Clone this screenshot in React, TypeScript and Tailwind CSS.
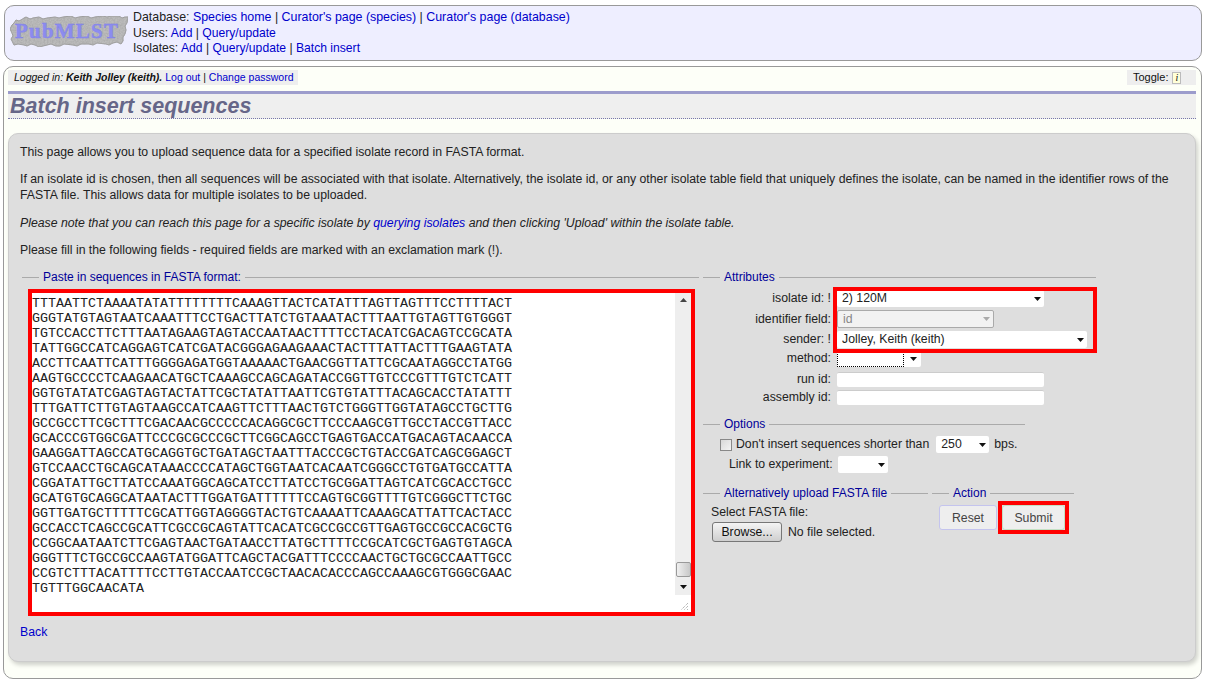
import type { ReactNode } from 'react'

const sequence = [
  'TTTAATTCTAAAATATATTTTTTTTCAAAGTTACTCATATTTAGTTAGTTTCCTTTTACT',
  'GGGTATGTAGTAATCAAATTTCCTGACTTATCTGTAAATACTTTAATTGTAGTTGTGGGT',
  'TGTCCACCTTCTTTAATAGAAGTAGTACCAATAACTTTTCCTACATCGACAGTCCGCATA',
  'TATTGGCCATCAGGAGTCATCGATACGGGAGAAGAAACTACTTTATTACTTTGAAGTATA',
  'ACCTTCAATTCATTTGGGGAGATGGTAAAAACTGAACGGTTATTCGCAATAGGCCTATGG',
  'AAGTGCCCCTCAAGAACATGCTCAAAGCCAGCAGATACCGGTTGTCCCGTTTGTCTCATT',
  'GGTGTATATCGAGTAGTACTATTCGCTATATTAATTCGTGTATTTACAGCACCTATATTT',
  'TTTGATTCTTGTAGTAAGCCATCAAGTTCTTTAACTGTCTGGGTTGGTATAGCCTGCTTG',
  'GCCGCCTTCGCTTTCGACAACGCCCCCACAGGCGCTTCCCAAGCGTTGCCTACCGTTACC',
  'GCACCCGTGGCGATTCCCGCGCCCGCTTCGGCAGCCTGAGTGACCATGACAGTACAACCA',
  'GAAGGATTAGCCATGCAGGTGCTGATAGCTAATTTACCCGCTGTACCGATCAGCGGAGCT',
  'GTCCAACCTGCAGCATAAACCCCATAGCTGGTAATCACAATCGGGCCTGTGATGCCATTA',
  'CGGATATTGCTTATCCAAATGGCAGCATCCTTATCCTGCGGATTAGTCATCGCACCTGCC',
  'GCATGTGCAGGCATAATACTTTGGATGATTTTTTCCAGTGCGGTTTTGTCGGGCTTCTGC',
  'GGTTGATGCTTTTTCGCATTGGTAGGGGTACTGTCAAAATTCAAAGCATTATTCACTACC',
  'GCCACCTCAGCCGCATTCGCCGCAGTATTCACATCGCCGCCGTTGAGTGCCGCCACGCTG',
  'CCGGCAATAATCTTCGAGTAACTGATAACCTTATGCTTTTCCGCATCGCTGAGTGTAGCA',
  'GGGTTTCTGCCGCCAAGTATGGATTCAGCTACGATTTCCCCAACTGCTGCGCCAATTGCC',
  'CCGTCTTTACATTTTCCTTGTACCAATCCGCTAACACACCCAGCCAAAGCGTGGGCGAAC',
  'TGTTTGGCAACATA',
]

const A = ({ children }: { children: ReactNode }) => (
  <a href="#" className="text-[#0000cc]">
    {children}
  </a>
)

const Logo = () => (
  <svg width="120" height="34" viewBox="0 0 120 34" className="shrink-0">
    <defs>
      <filter id="stone" x="0" y="0" width="100%" height="100%">
        <feTurbulence type="fractalNoise" baseFrequency="0.6" numOctaves="2" seed="4" />
        <feColorMatrix values="0 0 0 0 0.4  0 0 0 0 0.4  0 0 0 0 0.4  0 0 0 1.6 -0.45" />
        <feComposite in2="SourceAlpha" operator="in" result="noise" />
        <feMerge>
          <feMergeNode in="SourceGraphic" />
          <feMergeNode in="noise" />
        </feMerge>
      </filter>
    </defs>
    <path
      d="M3 10 L5 8 L7 5 L10 6 L12 5 L15 3 L17 2 L21 4 L24 3 L30 2 L34 4 L38 3 L46 2 L50 3 L54 2 L62 1 L66 3 L70 2 L78 1 L82 3 L86 2 L94 1 L98 2 L102 1 L110 1 L113 3 L116 2 L119 2 L118 8 L116 11 L117 15 L116 19 L114 22 L114 26 L112 29 L108 27 L104 28 L100 30 L97 29 L88 28 L84 30 L80 29 L72 29 L68 31 L64 30 L55 29 L51 31 L47 31 L42 29 L38 30 L30 32 L26 30 L22 29 L18 31 L15 30 L9 29 L5 30 L2 24 L4 21 L3 18 L1 14 Z"
      fill="#bcbcbc"
      stroke="#9a9a9a"
      strokeWidth="1"
      filter="url(#stone)"
    />
    <text
      x="6"
      y="23"
      fontFamily="'Liberation Serif', serif"
      fontWeight="700"
      fontSize="21"
      fill="#8c8cf0"
      stroke="#8080e4"
      strokeWidth="0.4"
      textLength="103"
      lengthAdjust="spacing"
    >
      PubMLST
    </text>
  </svg>
)

const Arrow = ({ muted }: { muted?: boolean }) => (
  <svg width="7" height="4" viewBox="0 0 7 4" className="shrink-0">
    <path d="M0 0 H7 L3.5 4 Z" fill={muted ? '#aaaaaa' : '#111111'} />
  </svg>
)

type SelectProps = {
  width: string
  value?: string
  disabled?: boolean
}

const Select = ({ width, value, disabled }: SelectProps) => (
  <div
    className={`flex h-full items-center justify-between rounded-[2px] pl-[5px] pr-[3px] ${width} ${
      disabled ? 'border border-[#aaaaaa] bg-[#f2f2f2] text-[#888888]' : 'bg-white'
    }`}
  >
    <span className="truncate">{value}</span>
    <Arrow muted={disabled} />
  </div>
)

const Section = ({
  title,
  className,
  children,
}: {
  title: string
  className: string
  children: ReactNode
}) => (
  <fieldset className={`border-t border-[#aaaaaa] ${className}`}>
    <legend className="ml-[17px] px-[4px] text-[12px] leading-[14px] text-[#000099]">{title}</legend>
    {children}
  </fieldset>
)

const Row = ({ label, className, children }: { label: string; className: string; children: ReactNode }) => (
  <div className={`flex items-center ${className}`}>
    <span className="w-[129px] shrink-0 pr-[1px] text-right">{label}</span>
    <div className="ml-[5px] h-full">{children}</div>
  </div>
)

const Toggle = () => (
  <div className="flex h-[15px] w-[69px] items-center bg-[#eeeeee] pl-[6px] text-[11px] text-[#111111]">
    Toggle:
    <span className="ml-[4px] flex h-[12px] w-[9px] items-center justify-center border border-[#bbbbbb] bg-[#ffffd8] font-['Liberation_Serif',serif] text-[10px] italic leading-none">
      i
    </span>
  </div>
)

export default function App() {
  return (
    <div className="h-[694px] w-[1205px] overflow-hidden bg-white pt-[5px] font-['Liberation_Sans',Arial,sans-serif] text-[12.27px] text-[#222222]">
      <header className="ml-[4px] flex h-[56px] w-[1198px] rounded-[10px] border border-[#999999] bg-[#eeeeff] pl-[4px] pt-[9px]">
        <Logo />
        <div className="ml-[4px] -mt-[5px] text-[12.15px] leading-[15.5px]">
          <div className="text-[12.4px]">
            Database: <A>Species home</A> | <A>Curator's page (species)</A> | <A>Curator's page (database)</A>
          </div>
          <div>
            Users: <A>Add</A> | <A>Query/update</A>
          </div>
          <div>
            Isolates: <A>Add</A> | <A>Query/update</A> | <A>Batch insert</A>
          </div>
        </div>
      </header>

      <main className="ml-[3px] mt-[5px] h-[613px] w-[1199px] rounded-[10px] border border-[#999999] bg-[#fdfff8] px-[4px] pt-[3px]">
        <div className="flex w-[1188px] items-start justify-between">
          <div className="flex h-[15px] items-center bg-[#eeeeee] pl-[6px] pr-[4px] text-[10.5px] text-[#111111]">
            <em>
              Logged in: <strong>Keith Jolley (keith).</strong>
            </em>
            <span className="ml-[3px]">
              <A>Log out</A> | <A>Change password</A>
            </span>
          </div>
          <Toggle />
        </div>

        <h1 className="mt-[6px] h-[28px] w-[1188px] border-t-[3px] border-b border-t-[#9c9ccc] border-b-[#7777aa] bg-[#efefef] pl-[2px] [border-bottom-style:dotted] text-[21.5px] font-bold italic leading-[24px] text-[#666688]">
          Batch insert sequences
        </h1>

        <section className="mt-[14px] h-[529px] w-[1188px] rounded-[10px] border border-[#cccccc] bg-[#dedede] pl-[11px] pt-[11px] shadow-[2px_3px_4px_rgba(0,0,0,0.18)]">
          <p className="h-[15px] leading-[15px]">
            This page allows you to upload sequence data for a specified isolate record in FASTA format.
          </p>
          <p className="mt-[11px] w-[1165px] leading-[16px]">
            If an isolate id is chosen, then all sequences will be associated with that isolate. Alternatively, the isolate id, or any other isolate table field that uniquely defines the isolate, can be named in the identifier rows of the FASTA file. This allows data for multiple isolates to be uploaded.
          </p>
          <p className="mt-[13px] leading-[15px]">
            <em>
              Please note that you can reach this page for a specific isolate by <A>querying isolates</A> and then clicking 'Upload' within the isolate table.
            </em>
          </p>
          <p className="mt-[12px] leading-[15px]">
            Please fill in the following fields - required fields are marked with an exclamation mark (!).
          </p>

          <div className="mt-[12px] flex items-start">
            <Section title="Paste in sequences in FASTA format:" className="ml-[2px] w-[677px] shrink-0">
              <div className="relative ml-[6px] mt-[5px] flex h-[327px] w-[667px] border-[4px] border-[#ff0000] bg-white">
                <pre className="flex-1 pt-[3px] font-['Liberation_Mono','Courier_New',monospace] text-[13.33px] leading-[15px] text-[#222222]">
                  {sequence.join('\n')}
                </pre>
                <div className="flex h-[302px] w-[16px] flex-col items-center justify-between bg-[#eeeeee] pb-[6px] pt-[5px]">
                  <svg width="7" height="4" viewBox="0 0 7 4">
                    <path d="M0 4 H7 L3.5 0 Z" fill="#444444" />
                  </svg>
                  <div className="mb-[8px] mt-auto h-[15px] w-[15px] rounded-[2px] border border-[#999999] bg-gradient-to-r from-[#f0f0f0] to-[#c8c8c8]" />
                  <Arrow />
                </div>
                <svg width="9" height="9" viewBox="0 0 9 9" className="absolute bottom-[1px] right-[2px]">
                  <path d="M8 1 L1 8 M8 4 L4 8 M8 7 L7 8" stroke="#999999" strokeWidth="1" strokeDasharray="1 1" />
                </svg>
              </div>
              <div className="ml-[-2px] mt-[9px] leading-[15px]">
                <A>Back</A>
              </div>
            </Section>

            <div className="ml-[4px] w-[393px] shrink-0">
              <Section title="Attributes" className="relative w-[393px]">
                <Row label="isolate id: !" className="mt-[6px] h-[17px]">
                  <Select width="w-[207px]" value="2) 120M" />
                </Row>
                <Row label="identifier field:" className="mt-[3px] h-[18px]">
                  <Select width="w-[157px]" value="id" disabled />
                </Row>
                <Row label="sender: !" className="mt-[3px] h-[17px]">
                  <Select width="w-[250px]" value="Jolley, Keith (keith)" />
                </Row>
                <Row label="method:" className="mt-[2px] h-[17px]">
                  <div className="flex h-full w-[84px] items-center justify-between rounded-[2px] bg-white pr-[4px]">
                    <span className="h-full w-[67px] border border-dotted border-black" />
                    <Arrow />
                  </div>
                </Row>
                <Row label="run id:" className="mt-[5px] h-[15px]">
                  <div className="h-full w-[207px] rounded-[2px] border-t border-[#cccccc] bg-white" />
                </Row>
                <Row label="assembly id:" className="mt-[3px] h-[15px]">
                  <div className="h-full w-[207px] rounded-[2px] border-t border-[#cccccc] bg-white" />
                </Row>
                <div className="pointer-events-none absolute left-[130px] top-[3px] h-[66px] w-[264px] border-[4px] border-[#ff0000]" />
              </Section>

              <Section title="Options" className="mt-[12px] w-[322px]">
                <div className="ml-[17px] mt-[5px] flex h-[17px] items-center">
                  <span className="h-[12px] w-[12px] border border-[#888888] bg-gradient-to-br from-[#d8d8d8] to-[#f4f4f4]" />
                  <span className="ml-[4px] whitespace-nowrap">Don't insert sequences shorter than</span>
                  <div className="ml-[7px] h-full">
                    <Select width="w-[53px]" value="250" />
                  </div>
                  <span className="ml-[5px]">bps.</span>
                </div>
                <div className="ml-[26px] mt-[3px] flex h-[17px] items-center">
                  <span className="w-[103px] whitespace-nowrap">Link to experiment:</span>
                  <div className="ml-[6px] h-full">
                    <Select width="w-[50px]" />
                  </div>
                </div>
              </Section>

              <div className="mt-[13px] flex items-start">
                <Section title="Alternatively upload FASTA file" className="w-[225px] shrink-0">
                  <div className="ml-[8px] mt-[5px] leading-[15px]">Select FASTA file:</div>
                  <div className="ml-[9px] mt-[2px] flex items-center">
                    <span className="flex h-[20px] w-[70px] items-center justify-center rounded-[3px] border border-[#777777] bg-gradient-to-b from-[#f4f4f4] to-[#cfcfcf] text-[#111111]">
                      Browse...
                    </span>
                    <span className="ml-[6px]">No file selected.</span>
                  </div>
                </Section>
                <Section title="Action" className="ml-[4px] w-[142px] shrink-0">
                  <div className="ml-[7px] mt-[5px] flex">
                    <button
                      type="button"
                      className="h-[25px] w-[58px] rounded-[3px] border border-[#c4c4ee] bg-[#eeeeee] pt-[1px] text-[#444444]"
                    >
                      Reset
                    </button>
                    <div className="relative ml-[5px]">
                      <button
                        type="button"
                        className="h-[25px] w-[63px] rounded-[3px] border border-[#c4e0c4] bg-[#eeeeee] pt-[1px] text-[#444444]"
                      >
                        Submit
                      </button>
                      <div className="pointer-events-none absolute -left-[4px] -top-[4px] h-[33px] w-[71px] border-[4px] border-[#ff0000]" />
                    </div>
                  </div>
                </Section>
              </div>
            </div>
          </div>
        </section>
      </main>
    </div>
  )
}
